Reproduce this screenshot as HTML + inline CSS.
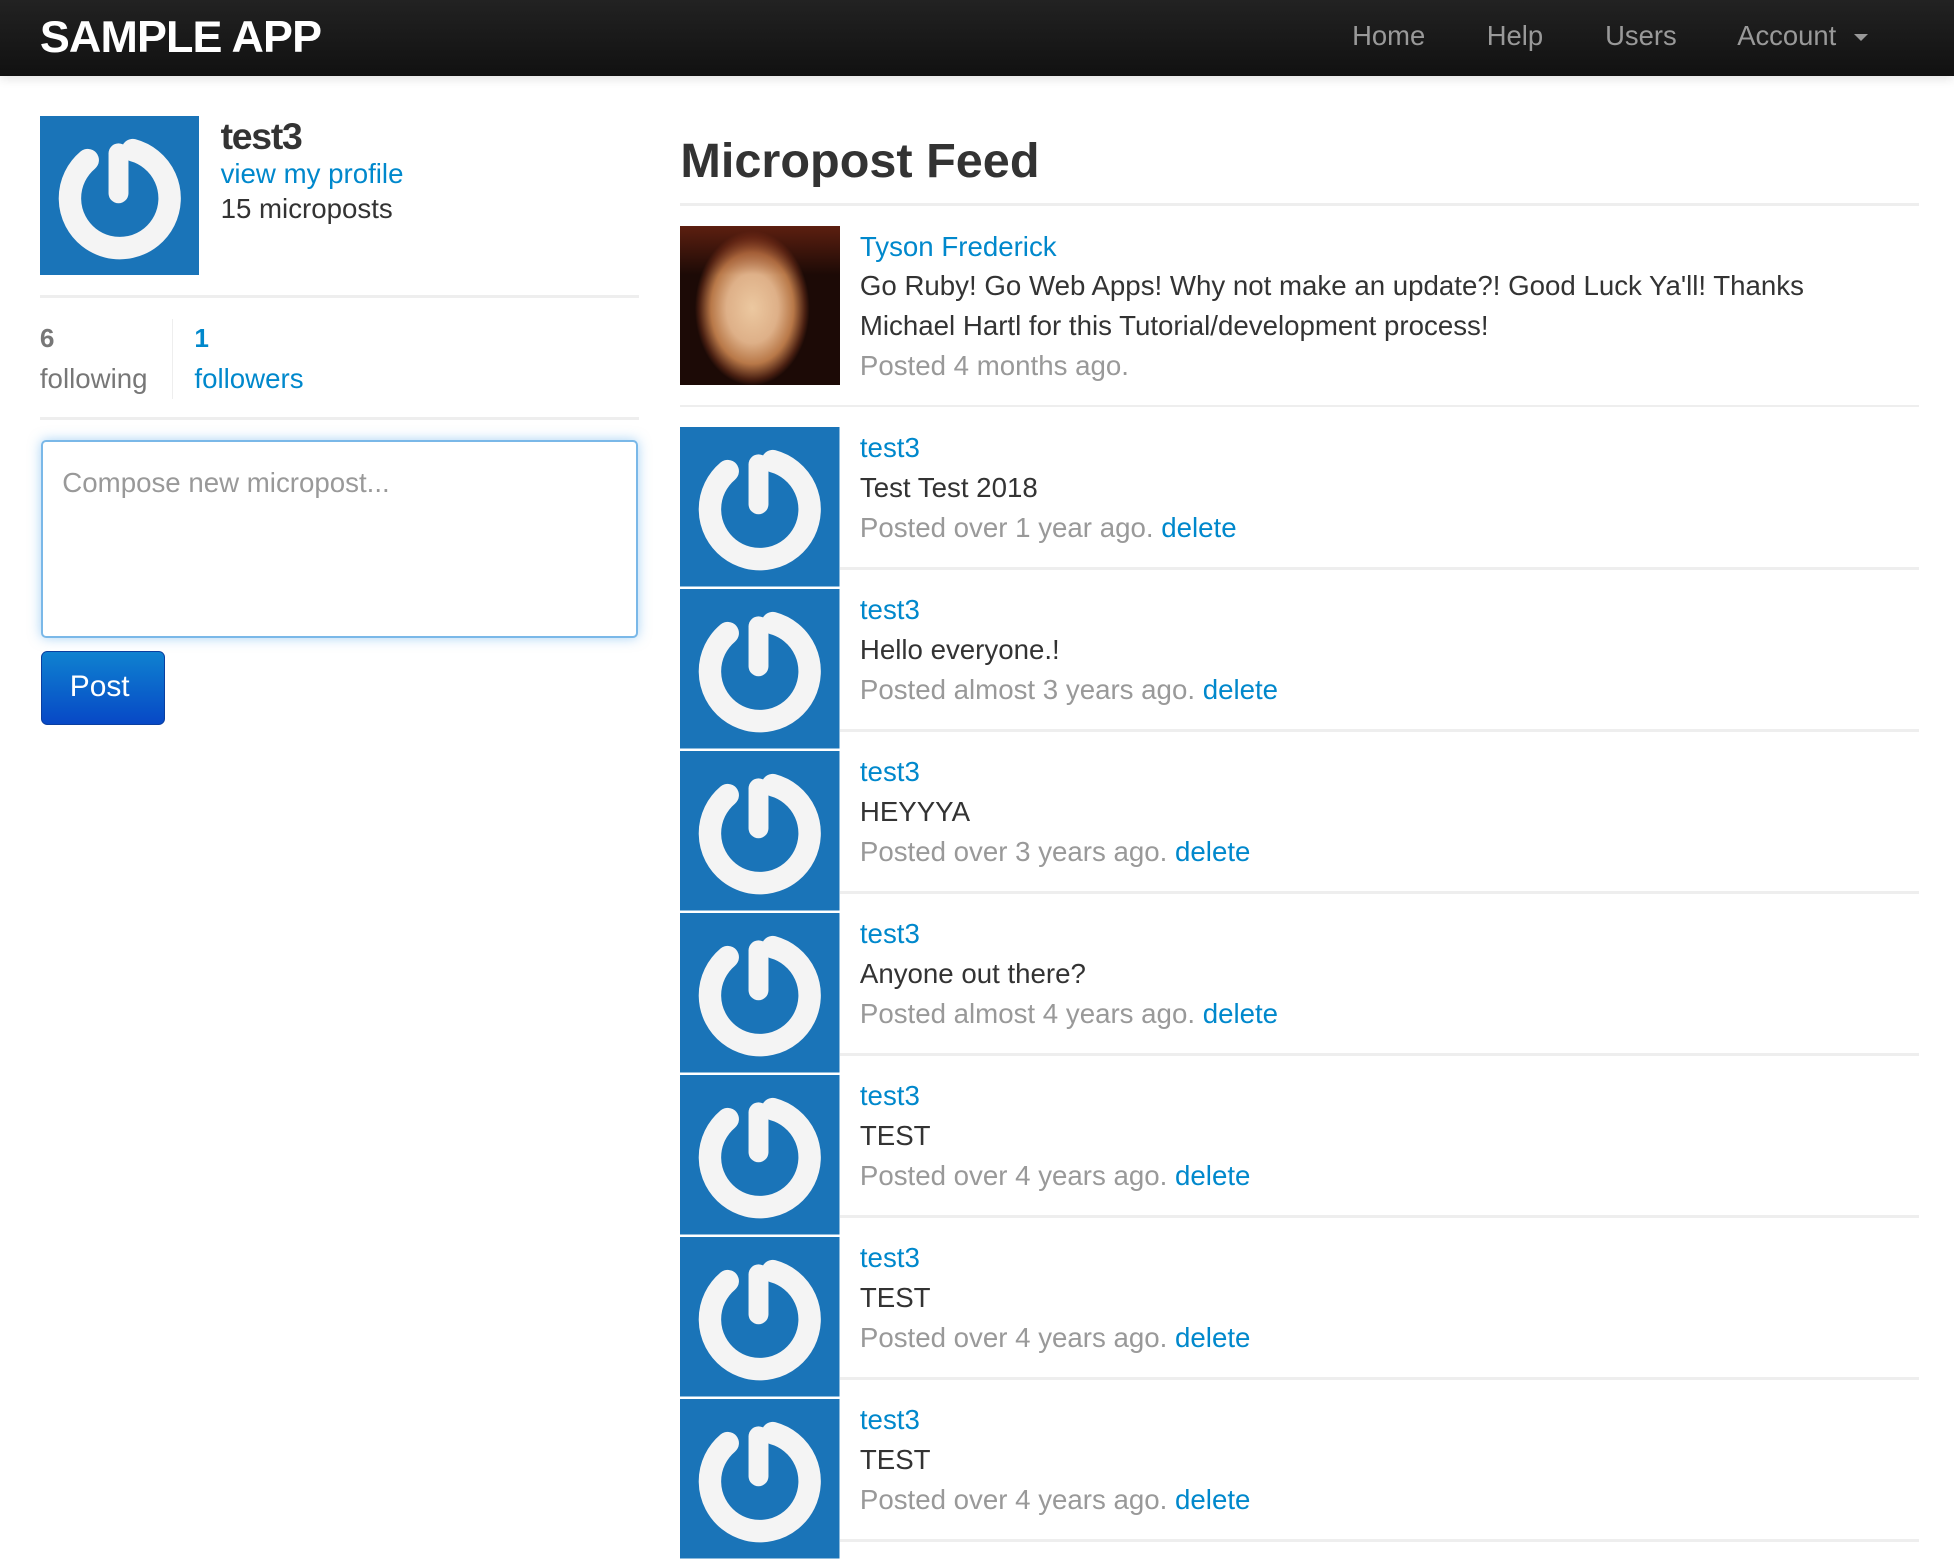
<!DOCTYPE html>
<html><head><meta charset="utf-8">
<style>
html,body{margin:0;padding:0;background:#fff;}
body{zoom:1.2462;width:1568px;height:1244px;position:relative;overflow:hidden;font-family:"Liberation Sans",Arial,sans-serif;color:#333;}
.a{position:absolute;white-space:nowrap;}
.nav{position:absolute;left:0;top:0;width:1568px;height:61px;background:linear-gradient(#222,#111);box-shadow:0 2px 8px rgba(0,0,0,.12);}
.logo{left:32px;top:9px;font-size:36px;font-weight:bold;color:#fff;letter-spacing:-0.7px;}
.nl{top:16px;font-size:22px;color:#999;}
.blue{color:#0088cc;}
.gray{color:#999;}
.hr{position:absolute;height:2px;background:#eee;}
.av{position:absolute;width:128px;height:128px;}
.t{font-size:22.2px;}
</style></head><body>
<svg width="0" height="0" style="position:absolute"><defs>
<symbol id="pw" viewBox="0 0 128 128">
<rect width="128" height="128" fill="#1a74b8"/>
<path d="M74.4 27.4 A40 40 0 1 1 38.3 35.4" fill="none" stroke="#f4f4f4" stroke-width="18" stroke-linecap="round"/>
<line x1="63" y1="30" x2="63" y2="62" stroke="#f4f4f4" stroke-width="16" stroke-linecap="round"/>
</symbol></defs></svg>

<div class="nav"></div>
<div class="a logo">SAMPLE APP</div>
<div class="a nl" style="left:1085px">Home</div>
<div class="a nl" style="left:1193px">Help</div>
<div class="a nl" style="left:1288px">Users</div>
<div class="a nl" style="left:1394px">Account</div>
<div class="a" style="left:1488px;top:27px;width:0;height:0;border-left:6px solid transparent;border-right:6px solid transparent;border-top:6px solid #999;"></div>

<svg class="av" style="left:32px;top:93px"><use href="#pw"/></svg>
<div class="a" style="left:177px;top:92px;font-size:30px;font-weight:bold;letter-spacing:-1px">test3</div>
<div class="a t blue" style="left:177px;top:127px">view my profile</div>
<div class="a t" style="left:177px;top:155px">15 microposts</div>
<div class="hr" style="left:32px;top:237px;width:481px"></div>
<div class="a" style="left:32px;top:259px;font-size:21px;font-weight:bold;color:#777">6</div>
<div class="a t" style="left:32px;top:291px;color:#777">following</div>
<div class="a" style="left:138px;top:256px;width:1px;height:64px;background:#eee"></div>
<div class="a blue" style="left:156px;top:259px;font-size:21px;font-weight:bold">1</div>
<div class="a t blue" style="left:156px;top:291px">followers</div>
<div class="hr" style="left:32px;top:335px;width:481px"></div>
<div class="a" style="left:33px;top:353px;width:476px;height:156px;border:2px solid #7ab8e8;border-radius:4px;box-shadow:0 0 10px rgba(82,168,236,.5)"></div>
<div class="a t" style="left:50px;top:375px;color:#999">Compose new micropost...</div>
<div class="a" style="left:33px;top:522px;width:98px;height:58px;border:1px solid #0a3fa0;border-radius:5px;background:linear-gradient(#0f82d0,#0748c6);"></div>
<div class="a" style="left:56px;top:538px;font-size:24px;color:#fff">Post</div>

<div class="a" style="left:546px;top:107px;font-size:39px;font-weight:bold;color:#333">Micropost Feed</div>
<div class="hr" style="left:546px;top:163px;width:994px"></div>

<div class="av" style="left:546px;top:181px;background:radial-gradient(ellipse 46px 62px at 58px 66px,#ecc8a0 0%,#deb088 45%,#b87848 72%,#4a2012 92%,#1c0a06 100%),#1c0a06"></div>
<div class="av" style="left:546px;top:181px;height:40px;background:linear-gradient(rgba(120,40,20,.7),rgba(160,70,30,0))"></div>
<div class="a t blue" style="left:690px;top:185px">Tyson Frederick</div>
<div class="a t" style="left:690px;top:217px">Go Ruby! Go Web Apps! Why not make an update?! Good Luck Ya'll! Thanks</div>
<div class="a t" style="left:690px;top:249px">Michael Hartl for this Tutorial/development process!</div>
<div class="a t gray" style="left:690px;top:281px">Posted 4 months ago.</div>
<div class="hr" style="left:546px;top:325px;width:994px"></div>

<svg class="av" style="left:546px;top:343px"><use href="#pw"/></svg>
<div class="a t blue" style="left:690px;top:347px">test3</div>
<div class="a t" style="left:690px;top:379px">Test Test 2018</div>
<div class="a t gray" style="left:690px;top:411px">Posted over 1 year ago. <span class="blue">delete</span></div>
<div class="hr" style="left:674px;top:455px;width:866px"></div>

<svg class="av" style="left:546px;top:473px"><use href="#pw"/></svg>
<div class="a t blue" style="left:690px;top:477px">test3</div>
<div class="a t" style="left:690px;top:509px">Hello everyone.!</div>
<div class="a t gray" style="left:690px;top:541px">Posted almost 3 years ago. <span class="blue">delete</span></div>
<div class="hr" style="left:674px;top:585px;width:866px"></div>

<svg class="av" style="left:546px;top:603px"><use href="#pw"/></svg>
<div class="a t blue" style="left:690px;top:607px">test3</div>
<div class="a t" style="left:690px;top:639px">HEYYYA</div>
<div class="a t gray" style="left:690px;top:671px">Posted over 3 years ago. <span class="blue">delete</span></div>
<div class="hr" style="left:674px;top:715px;width:866px"></div>

<svg class="av" style="left:546px;top:733px"><use href="#pw"/></svg>
<div class="a t blue" style="left:690px;top:737px">test3</div>
<div class="a t" style="left:690px;top:769px">Anyone out there?</div>
<div class="a t gray" style="left:690px;top:801px">Posted almost 4 years ago. <span class="blue">delete</span></div>
<div class="hr" style="left:674px;top:845px;width:866px"></div>

<svg class="av" style="left:546px;top:863px"><use href="#pw"/></svg>
<div class="a t blue" style="left:690px;top:867px">test3</div>
<div class="a t" style="left:690px;top:899px">TEST</div>
<div class="a t gray" style="left:690px;top:931px">Posted over 4 years ago. <span class="blue">delete</span></div>
<div class="hr" style="left:674px;top:975px;width:866px"></div>

<svg class="av" style="left:546px;top:993px"><use href="#pw"/></svg>
<div class="a t blue" style="left:690px;top:997px">test3</div>
<div class="a t" style="left:690px;top:1029px">TEST</div>
<div class="a t gray" style="left:690px;top:1061px">Posted over 4 years ago. <span class="blue">delete</span></div>
<div class="hr" style="left:674px;top:1105px;width:866px"></div>

<svg class="av" style="left:546px;top:1123px"><use href="#pw"/></svg>
<div class="a t blue" style="left:690px;top:1127px">test3</div>
<div class="a t" style="left:690px;top:1159px">TEST</div>
<div class="a t gray" style="left:690px;top:1191px">Posted over 4 years ago. <span class="blue">delete</span></div>
<div class="hr" style="left:674px;top:1235px;width:866px"></div>
</body></html>
